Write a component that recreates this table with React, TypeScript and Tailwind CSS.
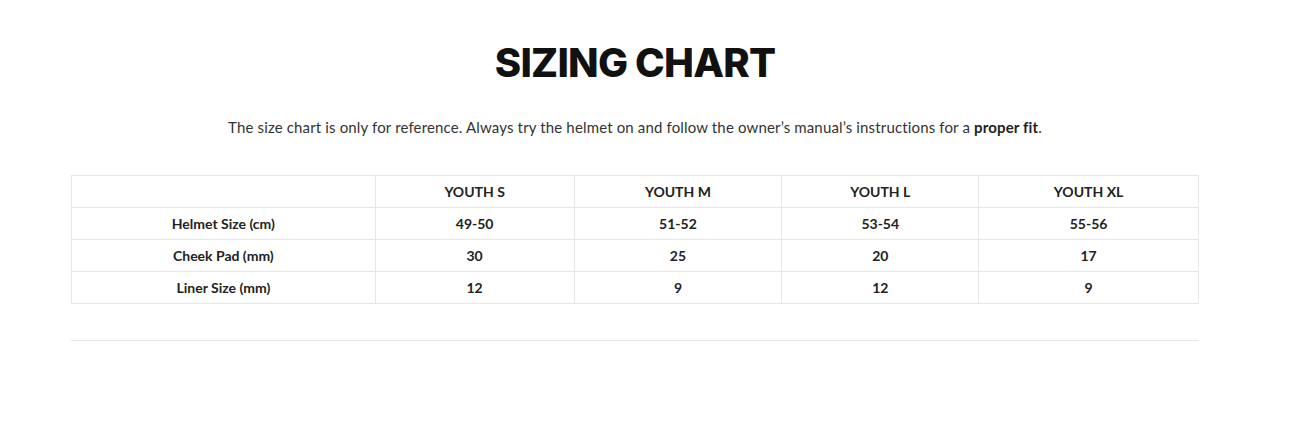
import React from 'react';

const sizes = ['YOUTH S', 'YOUTH M', 'YOUTH L', 'YOUTH XL'];

const rows: { label: string; values: string[] }[] = [
  { label: 'Helmet Size (cm)', values: ['49-50', '51-52', '53-54', '55-56'] },
  { label: 'Cheek Pad (mm)', values: ['30', '25', '20', '17'] },
  { label: 'Liner Size (mm)', values: ['12', '9', '12', '9'] },
];

const cell = 'border border-[#e6e6e6] h-[32px] p-0 text-center align-middle';

const App: React.FC = () => {
  return (
    <div className="min-h-screen bg-white text-[#222] font-['Lato',sans-serif]">
      <div className="w-[1128px] ml-[71px] pt-[40px]">
        {/* Heading */}
        <h1 className="text-center text-[40px] leading-[46px] font-extrabold tracking-[-0.02em] text-[#111] font-['Inter',sans-serif]">
          SIZING CHART
        </h1>

        <p className="mt-[30px] text-center text-[15px] leading-[22px] tracking-[0.01em] text-[#333]">
          The size chart is only for reference. Always try the helmet on and follow the owner’s manual’s instructions for a{' '}
          <strong className="font-bold text-[#222]">proper fit</strong>.
        </p>

        {/* Table */}
        <table className="mt-[37px] w-[1128px] border-collapse text-[14px] font-bold text-[#222]">
          <colgroup>
            <col className="w-[304px]" />
            <col className="w-[199px]" />
            <col className="w-[208px]" />
            <col className="w-[197px]" />
            <col className="w-[220px]" />
          </colgroup>
          <thead>
            <tr>
              <th className={cell}></th>
              {sizes.map((s) => (
                <th key={s} className={cell}>
                  {s}
                </th>
              ))}
            </tr>
          </thead>
          <tbody>
            {rows.map((r) => (
              <tr key={r.label}>
                <td className={cell}>{r.label}</td>
                {r.values.map((v, i) => (
                  <td key={i} className={cell}>
                    {v}
                  </td>
                ))}
              </tr>
            ))}
          </tbody>
        </table>

        <hr className="mt-[36px] border-0 border-t border-[#e6e6e6]" />
      </div>
    </div>
  );
};

export default App;
